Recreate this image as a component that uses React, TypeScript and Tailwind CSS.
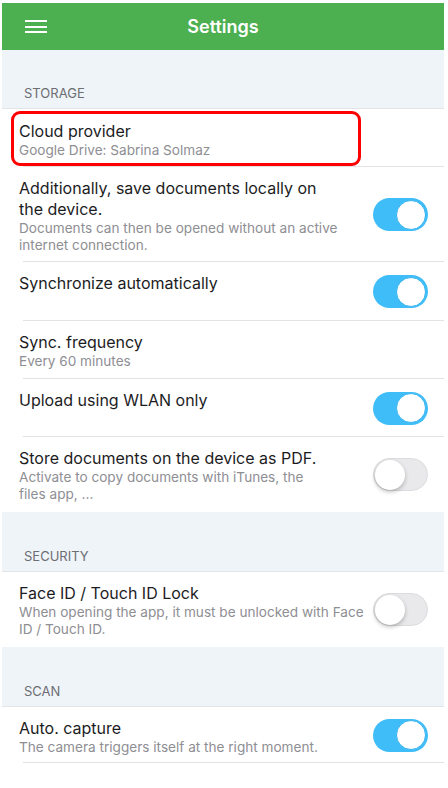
type Row = {
  title: string[];
  subtitle?: string[];
  toggle?: boolean;
  height: string;
  highlight?: boolean;
  divider?: boolean;
};

type Section = {
  label: string;
  height: string;
  rows: Row[];
};

const sections: Section[] = [
  {
    label: "STORAGE",
    height: "h-[59px]",
    rows: [
      { title: ["Cloud provider"], subtitle: ["Google Drive: Sabrina Solmaz"], height: "h-[58px]", highlight: true, divider: true },
      {
        title: ["Additionally, save documents locally on", "the device."],
        subtitle: ["Documents can then be opened without an active", "internet connection."],
        toggle: true,
        height: "h-[95px]",
        divider: true,
      },
      { title: ["Synchronize automatically"], toggle: true, height: "h-[59px]", divider: true },
      { title: ["Sync. frequency"], subtitle: ["Every 60 minutes"], height: "h-[58px]", divider: true },
      { title: ["Upload using WLAN only"], toggle: true, height: "h-[58px]", divider: true },
      {
        title: ["Store documents on the device as PDF."],
        subtitle: ["Activate to copy documents with iTunes, the", "files app, ..."],
        toggle: false,
        height: "h-[75px]",
      },
    ],
  },
  {
    label: "SECURITY",
    height: "h-[60px]",
    rows: [
      {
        title: ["Face ID / Touch ID Lock"],
        subtitle: ["When opening the app, it must be unlocked with Face", "ID / Touch ID."],
        toggle: false,
        height: "h-[75px]",
      },
    ],
  },
  {
    label: "SCAN",
    height: "h-[60px]",
    rows: [
      {
        title: ["Auto. capture"],
        subtitle: ["The camera triggers itself at the right moment."],
        toggle: true,
        height: "h-[56px]",
        divider: true,
      },
    ],
  },
];

function Toggle({ on }: { on: boolean }) {
  if (on) {
    return (
      <div className="w-[55px] h-[33px] rounded-full bg-[#3fbdf9] flex items-center justify-end p-[2px] shrink-0">
        <div className="w-[30px] h-[30px] rounded-full bg-white border border-[#35b3ef]" />
      </div>
    );
  }
  return (
    <div className="w-[55px] h-[33px] rounded-full bg-[#e9e9eb] border border-[#dcdcde] flex items-center justify-start p-[1px] shrink-0">
      <div className="w-[30px] h-[30px] rounded-full bg-white shadow-[0_2px_4px_rgba(0,0,0,0.25)]" />
    </div>
  );
}

function RowText({ row }: { row: Row }) {
  return (
    <div className="flex flex-col">
      {row.title.map((line) => (
        <div key={line} className="text-[16px] leading-[21px] text-[#1c1c1e] whitespace-nowrap">
          {line}
        </div>
      ))}
      {row.subtitle?.map((line) => (
        <div key={line} className="text-[13.6px] leading-[17px] text-[#8e8e93] whitespace-nowrap">
          {line}
        </div>
      ))}
    </div>
  );
}

function SettingsRow({ row }: { row: Row }) {
  return (
    <div className={`relative bg-white ${row.height}`}>
      {row.highlight ? (
        <div className="pl-[9px] pt-[2px]">
          <div className="w-[350px] h-[55px] border-[3px] border-[#ff0000] rounded-[9px] pl-[5px] pt-[7px]">
            <RowText row={row} />
          </div>
        </div>
      ) : (
        <div className="flex items-center justify-between h-full pl-[17px] pr-[16px]">
          <div className="self-start pt-[11px]">
            <RowText row={row} />
          </div>
          {row.toggle !== undefined && <Toggle on={row.toggle} />}
        </div>
      )}
      {row.divider && <div className="absolute bottom-0 left-[21px] right-0 h-px bg-[#e3e3e6]" />}
    </div>
  );
}

export default function App() {
  return (
    <div className="w-[448px] h-[788px] bg-white pl-[2px] pt-[3px]" style={{ fontFamily: "Inter, 'Liberation Sans', sans-serif" }}>
      <div className="w-[442px]">
        <header className="h-[47px] bg-[#4caf50] flex items-center relative">
          <div className="pl-[23px] flex flex-col gap-[3.5px]">
            <div className="w-[22px] h-[2px] bg-white" />
            <div className="w-[22px] h-[2px] bg-white" />
            <div className="w-[22px] h-[2px] bg-white" />
          </div>
          <div className="absolute inset-0 flex items-center justify-center text-white text-[18px] font-semibold">
            Settings
          </div>
        </header>
        {sections.map((section) => (
          <div key={section.label}>
            <div className={`${section.height} bg-[#eef4f8] border-b border-[#e1e5e8] flex items-end pb-[5px] pl-[22px] text-[13px] text-[#6d6d72]`}>
              {section.label}
            </div>
            {section.rows.map((row) => (
              <SettingsRow key={row.title[0]} row={row} />
            ))}
          </div>
        ))}
      </div>
    </div>
  );
}
